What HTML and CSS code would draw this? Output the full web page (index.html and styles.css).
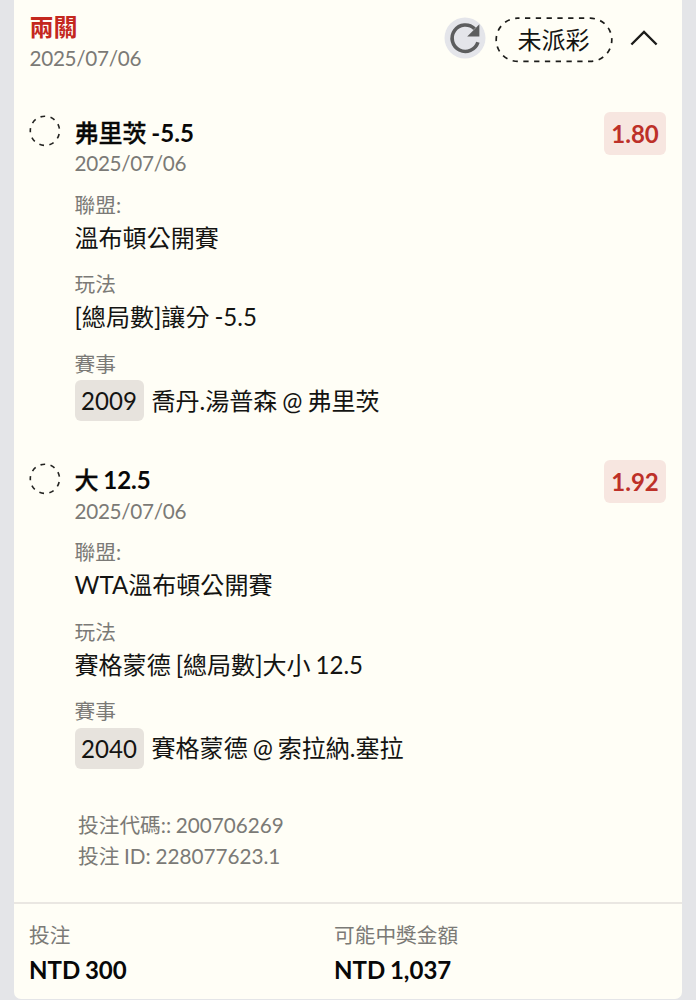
FILE: index.html
```html
<!DOCTYPE html>
<html lang="zh-Hant">
<head>
<meta charset="utf-8">
<title>投注</title>
<link rel="stylesheet" href="styles.css">
</head>
<body>
<main class="card">
  <header class="head">
    <div class="head-text">
      <div class="parlay">兩關</div>
      <div class="date">2025/07/06</div>
    </div>
    <div class="actions">
      <svg class="refresh" viewBox="0 0 42 42"><circle cx="21" cy="21" r="20.5" fill="#e4e5ea"/><path d="M33.9 25.2A13.2 13.2 0 1 1 30.6 11.8" fill="none" stroke="#5c5d5e" stroke-width="3.6"/><path d="M35.4 7.2v12.2H23.2Z" fill="#5c5d5e"/></svg>
      <div class="status">
        <svg class="status-line" viewBox="0 0 118 46"><rect x="1.2" y="1.2" width="115.6" height="43.2" rx="21.6" fill="none" stroke="#1c1c1a" stroke-width="1.7" stroke-dasharray="5.3 5.49" stroke-dashoffset="3.6"/></svg>
        <span>未派彩</span>
      </div>
      <svg class="chevron" viewBox="0 0 28 16"><path d="M1.4 14.5 14 2 26.6 14.5" fill="none" stroke="#1c1c1a" stroke-width="2.4"/></svg>
    </div>
  </header>

  <section class="bet">
    <svg class="ring" viewBox="0 0 32 32"><circle cx="15.9" cy="15.8" r="14.6" fill="none" stroke="#222220" stroke-width="1.6" stroke-dasharray="4.7 5.49" stroke-dashoffset="2.3" transform="rotate(181 15.9 15.8)"/></svg>
    <div class="detail">
      <div class="pick"><span class="name">弗里茨</span> -5.5</div>
      <div class="date">2025/07/06</div>
      <div class="field first"><div class="label">聯盟:</div><div class="value">溫布頓公開賽</div></div>
      <div class="field"><div class="label">玩法</div><div class="value">[總局數]讓分 -5.5</div></div>
      <div class="field"><div class="label">賽事</div><div class="match"><span class="code">2009</span><span>喬丹.湯普森 @ 弗里茨</span></div></div>
    </div>
    <div class="odds">1.80</div>
  </section>

  <section class="bet">
    <svg class="ring" viewBox="0 0 32 32"><circle cx="15.9" cy="15.8" r="14.6" fill="none" stroke="#222220" stroke-width="1.6" stroke-dasharray="4.7 5.49" stroke-dashoffset="2.3" transform="rotate(181 15.9 15.8)"/></svg>
    <div class="detail">
      <div class="pick"><span class="name">大</span> 12.5</div>
      <div class="date">2025/07/06</div>
      <div class="field first"><div class="label">聯盟:</div><div class="value">WTA溫布頓公開賽</div></div>
      <div class="field"><div class="label">玩法</div><div class="value">賽格蒙德 [總局數]大小 12.5</div></div>
      <div class="field"><div class="label">賽事</div><div class="match"><span class="code">2040</span><span>賽格蒙德 @ 索拉納.塞拉</span></div></div>
    </div>
    <div class="odds">1.92</div>
  </section>

  <div class="ids">
    <div>投注代碼:: 200706269</div>
    <div>投注 ID: 228077623.1</div>
  </div>

  <footer class="totals">
    <div><div class="label">投注</div><div class="amount">NTD 300</div></div>
    <div><div class="label">可能中獎金額</div><div class="amount">NTD 1,037</div></div>
  </footer>
</main>
</body>
</html>
```
FILE: styles.css
```css
* { box-sizing: border-box; }
body {
  margin: 0;
  height: 1000px;
  overflow: hidden;
  background: #e4e5e8;
  font-family: Lato, "Noto Sans CJK TC", sans-serif;
  font-size: 24.05px;
  line-height: 30px;
  word-spacing: -1.2px;
  color: #141412;
}
.card {
  width: 668px;
  height: 999px;
  margin-left: 14px;
  background: #fffef6;
  border-radius: 0 0 7px 7px;
}
.head {
  display: flex;
  justify-content: space-between;
  height: 112px;
  padding: 12px 24px 0 15px;
}
.parlay { font-weight: 700; color: #c4281e; }
.head .date { margin-top: 2.5px; }
.date, .label, .ids { font-size: 20.7px; line-height: 26px; color: #7b7a76; }
.date { letter-spacing: -0.3px; }
.ids { word-spacing: -0.6px; }
.head-text { padding-left: 0.5px; }
.actions { display: flex; align-items: flex-start; padding-top: 5px; }
.refresh { width: 42px; height: 42px; }
.status {
  position: relative;
  width: 118px;
  height: 46px;
  margin-left: 8.5px;
  text-align: center;
  line-height: 45px;
}
.status-line { position: absolute; left: 0; top: 0; width: 118px; height: 46px; }
.chevron { width: 28px; height: 16px; margin: 13px 0 0 17.5px; }
.bet {
  display: flex;
  align-items: flex-start;
  height: 347.5px;
  padding: 0 16px 0 15px;
}
.ring { width: 32px; height: 32px; margin-top: 3px; }
.detail { flex: 1; padding: 5.5px 0 0 13.5px; }
.pick { font-weight: 700; color: #080808; }
.name { font-weight: 500; -webkit-text-stroke: 0.3px #080808; }
.detail .date { margin-top: 2.5px; }
.field { margin-top: 18.5px; }
.field.first { margin-top: 15.5px; }
.value { margin-top: 5px; }
.match { display: flex; align-items: center; gap: 8px; margin-top: 3.5px; }
.code {
  width: 69px;
  height: 41px;
  line-height: 41px;
  text-align: center;
  background: #e7e3dd;
  border-radius: 6px;
}
.odds {
  width: 62px;
  height: 43px;
  line-height: 44px;
  text-align: center;
  font-weight: 700;
  color: #bd3028;
  background: #f7e6e0;
  border-radius: 6px;
}
.ids { height: 95px; padding: 3px 0 0 64px; line-height: 31px; }
.totals {
  display: grid;
  grid-template-columns: 305px 1fr;
  border-top: 2px solid #eae7e2;
  padding: 18px 0 0 15px;
}
.amount { margin-top: 7px; font-weight: 700; color: #080808; }
```
